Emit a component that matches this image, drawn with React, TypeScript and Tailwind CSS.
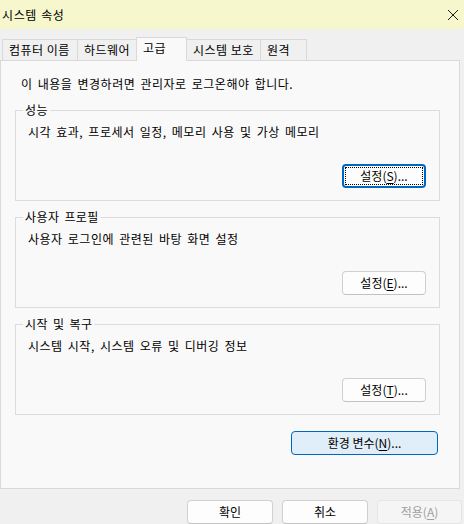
import React from 'react';

const font = { fontFamily: '"Noto Sans CJK KR", "Noto Sans", sans-serif' };

type Tab = { label: string; width: string; active?: boolean };

const tabs: Tab[] = [
  { label: '컴퓨터 이름', width: 'w-[76px]' },
  { label: '하드웨어', width: 'w-[60px]' },
  { label: '고급', width: 'w-[51px]', active: true },
  { label: '시스템 보호', width: 'w-[75px]' },
  { label: '원격', width: 'w-[47px]' },
];

function Mnemonic({ before, letter }: { before: string; letter: string }) {
  return (
    <span>
      {before}(<span className="underline underline-offset-2">{letter}</span>)
      {before === '적용' ? '' : '...'}
    </span>
  );
}

function PushButton({
  children,
  focused,
  disabled,
  className = '',
}: {
  children: React.ReactNode;
  focused?: boolean;
  disabled?: boolean;
  className?: string;
}) {
  if (focused) {
    return (
      <div
        className={`h-[24px] rounded-[4px] border-2 border-[#0067c0] bg-[#fdfdfd] p-[1px] ${className}`}
      >
        <div className="flex h-full w-full items-center justify-center border border-dotted border-black text-[12px] leading-[16px] text-black">
          {children}
        </div>
      </div>
    );
  }
  return (
    <div
      className={`flex h-[24px] items-center justify-center rounded-[4px] border text-[12px] leading-[16px] ${
        disabled
          ? 'border-[#e5e5e5] bg-[#f5f5f5] text-[#a0a0a0]'
          : 'border-[#d0d0d0] border-b-[#c2c2c2] bg-[#fdfdfd] text-black'
      } ${className}`}
    >
      {children}
    </div>
  );
}

function GroupBox({
  title,
  text,
  children,
}: {
  title: string;
  text: string;
  children: React.ReactNode;
}) {
  return (
    <div className="relative flex h-[91px] w-[425px] flex-col justify-between border border-[#dcdcdc] pb-[12px] pl-[12px] pr-[13px] pt-[13px]">
      <span className="absolute -top-[9px] left-[7px] bg-[#f9f9f9] px-[2px] text-[12px] leading-[16px] tracking-[0.4px] text-black [word-spacing:2px]">
        {title}
      </span>
      <p className="text-[12px] leading-[16px] tracking-[0.5px] text-black [word-spacing:2px]">
        {text}
      </p>
      <div className="flex justify-end">{children}</div>
    </div>
  );
}

export default function App() {
  return (
    <div className="flex h-[524px] w-[464px] flex-col bg-[#f0f0f0] text-black" style={font}>
      {/* Title bar */}
      <div className="flex h-[29px] shrink-0 items-center justify-between bg-[#f7f7cd] pl-[2px] pr-[4px]">
        <span className="text-[12px] leading-[16px] tracking-[0.6px] [word-spacing:1px]">
          시스템 속성
        </span>
        <svg width="12" height="12" viewBox="0 0 12 12" className="mr-[1px]">
          <path d="M1 1 L11 11 M11 1 L1 11" stroke="#1a1a1a" strokeWidth="1" fill="none" />
        </svg>
      </div>

      {/* Tabs */}
      <div className="mt-[8px] flex h-[23px] shrink-0 items-end pl-[2px]">
        {tabs.map((t, i) => (
          <div
            key={t.label}
            className={`${t.width} ${i > 0 ? '-ml-px' : ''} flex items-center border border-b-0 border-[#d9d9d9] pl-[6px] text-[12px] leading-[16px] tracking-[0.5px] ${
              t.active
                ? 'relative z-10 -mb-px h-[24px] bg-[#f9f9f9] pb-[3px]'
                : 'h-[21px] bg-[#f0f0f0]'
            }`}
          >
            {t.label}
          </div>
        ))}
      </div>

      {/* Panel */}
      <div className="flex h-[429px] w-[460px] shrink-0 flex-col border border-[#d9d9d9] bg-[#f9f9f9] pl-[14px] pr-[19px] pt-[15px]">
        <p className="pl-[6px] text-[12px] leading-[16px] tracking-[0.5px] [word-spacing:2px]">
          이 내용을 변경하려면 관리자로 로그온해야 합니다.
        </p>
        <div className="mt-[18px] flex flex-col gap-[16px]">
          <GroupBox title="성능" text="시각 효과, 프로세서 일정, 메모리 사용 및 가상 메모리">
            <PushButton focused className="w-[84px]">
              <Mnemonic before="설정" letter="S" />
            </PushButton>
          </GroupBox>
          <GroupBox title="사용자 프로필" text="사용자 로그인에 관련된 바탕 화면 설정">
            <PushButton className="w-[84px]">
              <Mnemonic before="설정" letter="E" />
            </PushButton>
          </GroupBox>
          <GroupBox title="시작 및 복구" text="시스템 시작, 시스템 오류 및 디버깅 정보">
            <PushButton className="w-[84px]">
              <Mnemonic before="설정" letter="T" />
            </PushButton>
          </GroupBox>
        </div>
        <div className="mr-[2px] mt-[16px] flex justify-end">
          <div className="flex h-[24px] w-[147px] items-center justify-center rounded-[4px] border border-[#0067c0] bg-[#e0eef9] text-[12px] leading-[16px]">
            <Mnemonic before="환경 변수" letter="N" />
          </div>
        </div>
      </div>

      {/* Dialog buttons */}
      <div className="mt-[11px] flex justify-end gap-[9px] pr-[2px]">
        <PushButton className="w-[86px]">확인</PushButton>
        <PushButton className="w-[86px]">취소</PushButton>
        <PushButton disabled className="w-[85px]">
          <Mnemonic before="적용" letter="A" />
        </PushButton>
      </div>
    </div>
  );
}
